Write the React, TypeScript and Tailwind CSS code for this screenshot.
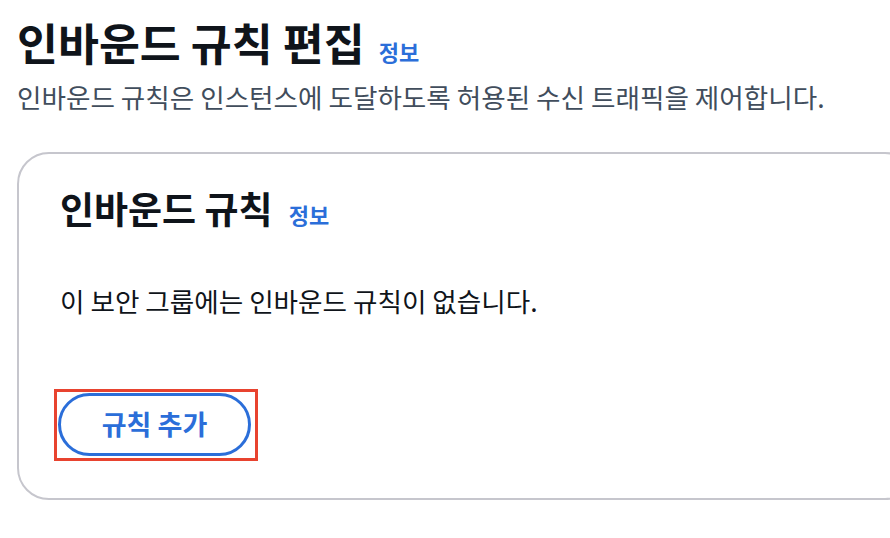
import React from 'react';

const font = { fontFamily: '"Noto Sans CJK KR", "Noto Sans", sans-serif' };

export default function App() {
  return (
    <div className="w-[890px] h-[538px] bg-white overflow-hidden" style={font}>
      <div className="pl-[17px] pt-[14px]">
        {/* Page header */}
        <div className="flex items-baseline gap-[14px]">
          <h1 className="text-[44.5px] leading-[56px] font-bold text-[#0f141a]">인바운드 규칙 편집</h1>
          <a className="text-[22px] font-bold text-[#2b6ed9]">정보</a>
        </div>
        <p className="mt-[10px] text-[26.6px] leading-[34px] text-[#414d5c]">
          인바운드 규칙은 인스턴스에 도달하도록 허용된 수신 트래픽을 제어합니다.
        </p>

        {/* Card */}
        <div className="mt-[38px] w-[900px] h-[348px] border-2 border-[#c6c6cd] rounded-[32px] pl-[41px] pt-[30px]">
          <div className="flex items-baseline gap-[16px]">
            <h2 className="text-[37px] leading-[48px] font-bold text-[#0f141a]">인바운드 규칙</h2>
            <a className="text-[22px] font-bold text-[#2b6ed9]">정보</a>
          </div>
          <p className="mt-[52px] text-[26.6px] leading-[34px] text-[#0f141a]">
            이 보안 그룹에는 인바운드 규칙이 없습니다.
          </p>
          <div className="mt-[71px] inline-block border-[3px] border-[#e8432f] pl-[1px] pr-[4px] pt-[1px] pb-[2px] -ml-[6px]">
            <button className="w-[193px] h-[63px] rounded-full border-[3px] border-[#2b6ed9] text-[27px] font-bold text-[#2b6ed9] flex items-center justify-center">
              규칙 추가
            </button>
          </div>
        </div>
      </div>
    </div>
  );
}
